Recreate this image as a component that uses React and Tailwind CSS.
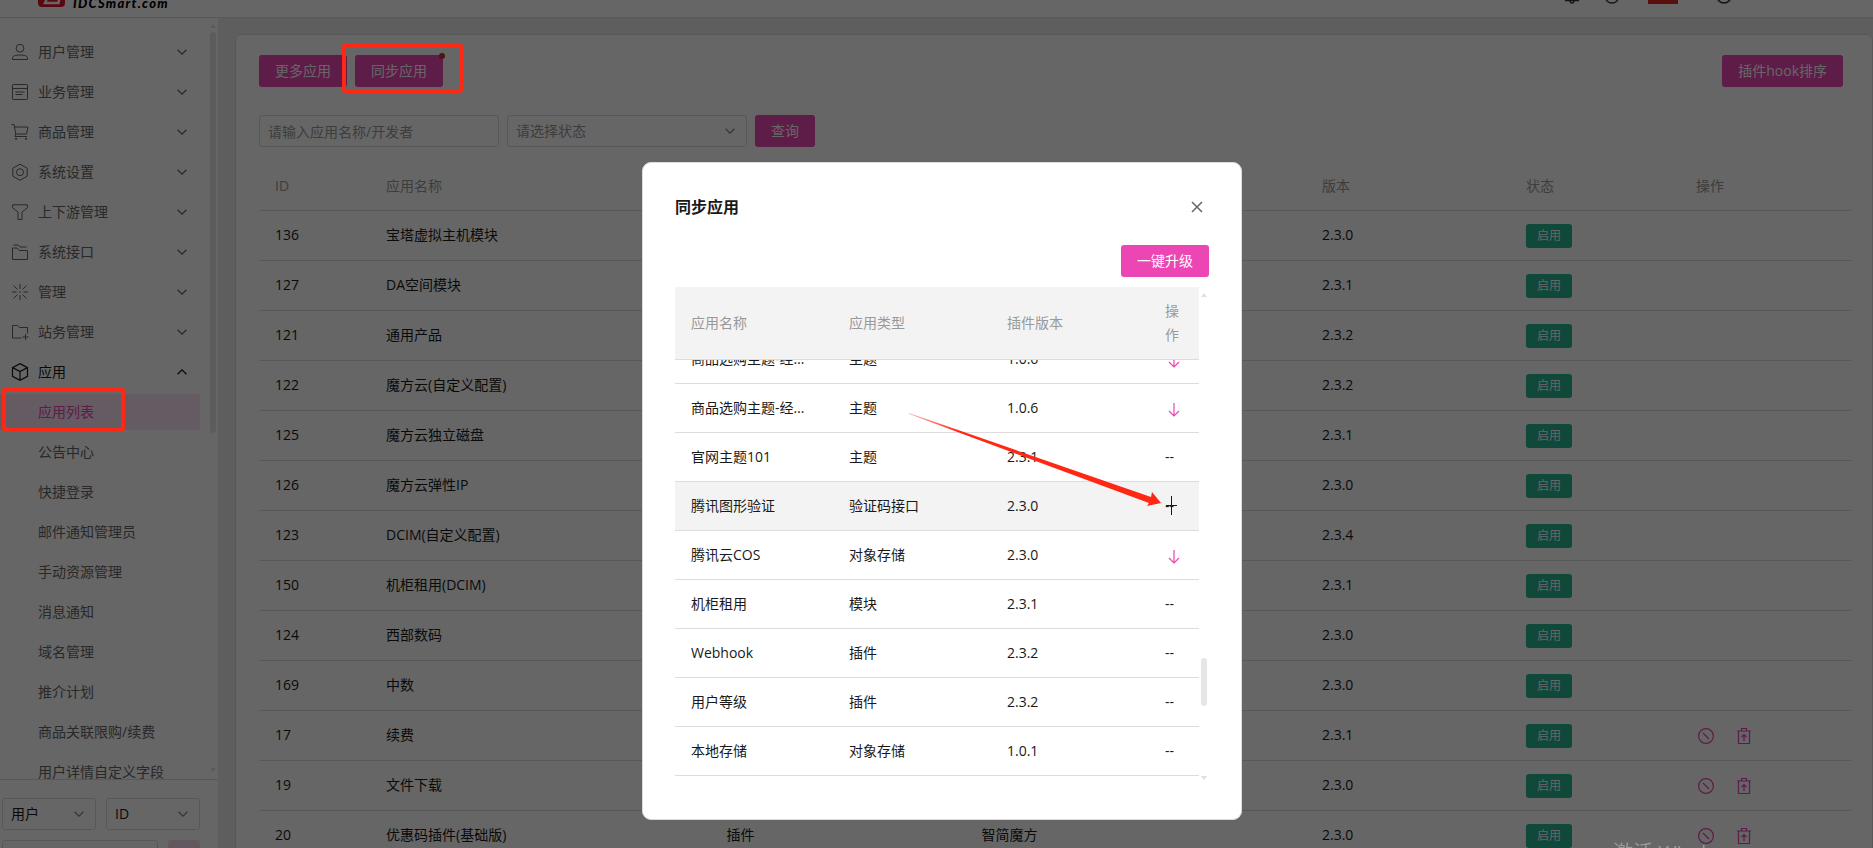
import { useLayoutEffect, useRef } from 'react';

const FONT = "font-['Open_Sans','Noto_Sans_CJK_SC',sans-serif]";

const stroke = { fill: 'none', stroke: 'currentColor', strokeWidth: 1 };

const MENU_ICONS = {
  user: (
    <>
      <circle cx="8" cy="4.2" r="3.9" />
      <path d="M.5 15.500v-1.500c0-2 3-3 7.500-3s7.500 1 7.500 3v1.500z" />
    </>
  ),
  list: (
    <>
      <rect x=".5" y=".5" width="15" height="15" rx=".6" />
      <path d="M.5 4.500h15M3.500 8h9M3.500 10.500h7" />
    </>
  ),
  cart: (
    <>
      <path d="M-.5.500h2.500l1.800 9.500h10.700l1.500-7h-14M3.800 10l-.8 2.500h12" />
      <path d="M3 14.800h2M13 14.800h2" strokeWidth="1.500" />
    </>
  ),
  setting: (
    <>
      <path d="M8 .2l7.200 4v8l-7.200 4-7.200-4v-8z" />
      <circle cx="8" cy="8.200" r="3.500" />
    </>
  ),
  filter: <path d="M.6.800h14.800v3l-5.400 4.200v7.500h-4v-7.500l-5.400-4.200z" />,
  folders: (
    <>
      <path d="M.5 4h4.500l2.500 2.500h8v9h-15z" />
      <path d="M1.500 1h4.500l2 2h6.500" />
    </>
  ),
  burst: (
    <path d="M8 0v5M8 11v5M0 8h4.500M11.500 8h4.500M1.500 1.500l4 4M14.500 1.500l-4 4M1.500 14.500l4-4M14.500 14.500l-4-4M7 8h2" />
  ),
  folderAdd: (
    <>
      <path d="M9.500 14h-9v-12.500h5l2 2h8v6" />
      <path d="M13.500 10v6M10.500 13h6" />
    </>
  ),
  cube: (
    <>
      <path d="M8-.4l7.500 4v8.800l-7.500 4-7.500-4v-8.800z" strokeWidth="1.200" />
      <path d="M.5 3.600l7.500 4 7.500-4M8 7.600v8.800" strokeWidth="1.200" />
    </>
  ),
};

const MENU = [
  ['user', '用户管理'],
  ['list', '业务管理'],
  ['cart', '商品管理'],
  ['setting', '系统设置'],
  ['filter', '上下游管理'],
  ['folders', '系统接口'],
  ['burst', '管理'],
  ['folderAdd', '站务管理'],
];

const SUBMENU = [
  '公告中心', '快捷登录', '邮件通知管理员', '手动资源管理', '消息通知',
  '域名管理', '推介计划', '商品关联限购/续费', '用户详情自定义字段',
];

const APPS = [
  { id: 136, name: '宝塔虚拟主机模块', version: '2.3.0' },
  { id: 127, name: 'DA空间模块', version: '2.3.1' },
  { id: 121, name: '通用产品', version: '2.3.2' },
  { id: 122, name: '魔方云(自定义配置)', version: '2.3.2' },
  { id: 125, name: '魔方云独立磁盘', version: '2.3.1' },
  { id: 126, name: '魔方云弹性IP', version: '2.3.0' },
  { id: 123, name: 'DCIM(自定义配置)', version: '2.3.4' },
  { id: 150, name: '机柜租用(DCIM)', version: '2.3.1' },
  { id: 124, name: '西部数码', version: '2.3.0' },
  { id: 169, name: '中数', version: '2.3.0' },
  { id: 17, name: '续费', version: '2.3.1', ops: true },
  { id: 19, name: '文件下载', version: '2.3.0', ops: true },
  { id: 20, name: '优惠码插件(基础版)', type: '插件', author: '智简魔方', version: '2.3.0', ops: true },
];

const SYNC = [
  { name: '商品选购主题-经典版', type: '主题', version: '1.0.6', upgrade: true },
  { name: '商品选购主题-经典版', type: '主题', version: '1.0.6', upgrade: true },
  { name: '官网主题101', type: '主题', version: '2.3.1' },
  { name: '腾讯图形验证', type: '验证码接口', version: '2.3.0', hover: true },
  { name: '腾讯云COS', type: '对象存储', version: '2.3.0', upgrade: true },
  { name: '机柜租用', type: '模块', version: '2.3.1' },
  { name: 'Webhook', type: '插件', version: '2.3.2' },
  { name: '用户等级', type: '插件', version: '2.3.2' },
  { name: '本地存储', type: '对象存储', version: '1.0.1' },
];

function Chevron({ up, className = '' }) {
  return (
    <svg viewBox="0 0 10 6" className={`h-1.5 w-2.5 shrink-0 ${className}`} fill="none" stroke="currentColor" strokeWidth="1.3">
      <path d={up ? 'M.6 5.300l4.400-4.400 4.400 4.400' : 'M.6.700l4.400 4.400 4.400-4.400'} />
    </svg>
  );
}

function PrimaryButton({ children, className = '' }) {
  return (
    <button type="button" className={`h-8 shrink-0 rounded-[3px] bg-[#eb46b4] px-4 text-sm whitespace-nowrap text-white ${className}`}>
      {children}
    </button>
  );
}

function SelectBox({ label, option, className = '' }) {
  return (
    <div className={`relative flex items-center ${className}`}>
      <select aria-label={label} className="h-8 w-full appearance-none rounded-[3px] border border-[#dcdcdc] bg-white px-2 text-sm text-inherit">
        <option>{option}</option>
      </select>
      <Chevron className="pointer-events-none absolute right-3 text-[#888]" />
    </div>
  );
}

function Header() {
  return (
    <header className="flex h-[18px] shrink-0 items-end justify-between overflow-hidden border-b border-[#dcdcdc] bg-white">
      <div className="flex items-end pl-[38px]">
        <svg viewBox="0 0 27 40" className="mb-[10px] h-10 w-[27px]">
          <rect width="27" height="40" rx="4" fill="#e6142d" />
          <path d="M7 36l2.500-6h12l-1 6z" fill="none" stroke="#fff" strokeWidth="2.500" />
        </svg>
        <span className="mb-[7px] ml-2 font-['Lato',sans-serif] text-[13px] leading-[13px] font-black tracking-widest text-black italic">
          IDCSmart.com
        </span>
      </div>
      <div className="flex items-end pr-[141px] text-[#333]">
        <svg viewBox="0 0 16 16" className="mb-[13px] h-4 w-4" {...stroke} strokeWidth="1.300">
          <path d="M1 12.500h14M6 12.500a2 2.500 0 0 0 4 0M3 12v-6a5 5 0 0 1 10 0v6" />
        </svg>
        <svg viewBox="0 0 16 16" className="mb-[13px] ml-6 h-4 w-4" {...stroke} strokeWidth="1.300">
          <circle cx="8" cy="8" r="7" />
        </svg>
        <span className="mb-[13px] ml-7 h-4 w-[30px] bg-[#e3261f]" />
        <svg viewBox="0 0 16 16" className="mb-[13px] ml-[38px] h-4 w-4" {...stroke} strokeWidth="1.500">
          <circle cx="8" cy="8" r="7" />
        </svg>
      </div>
    </header>
  );
}

function Sidebar() {
  return (
    <aside className="flex w-[218px] shrink-0 flex-col bg-white text-sm text-[#666]">
      <div className="flex min-h-0 flex-1 overflow-hidden">
        <nav className="flex w-[200px] flex-col gap-1 pt-4">
          {MENU.map(([icon, label]) => (
            <a key={label} href="#" className="flex h-9 shrink-0 items-center pr-[13px] pl-3">
              <svg viewBox="0 0 16 16" className="h-4 w-4 overflow-visible" {...stroke}>{MENU_ICONS[icon]}</svg>
              <span className="ml-2.5 flex-1">{label}</span>
              <Chevron />
            </a>
          ))}
          <a href="#" className="flex h-9 shrink-0 items-center pr-[13px] pl-3 text-[#191919]">
            <svg viewBox="0 0 16 16" className="h-4 w-4 overflow-visible" {...stroke}>{MENU_ICONS.cube}</svg>
            <span className="ml-2.5 flex-1">应用</span>
            <Chevron up />
          </a>
          <a href="#" className="flex h-9 shrink-0 items-center rounded-r-[3px] bg-[#fde4f5] pl-[38px] text-[#eb46b4]">应用列表</a>
          {SUBMENU.map((label) => (
            <a key={label} href="#" className="flex h-9 shrink-0 items-center pl-[38px]">{label}</a>
          ))}
        </nav>
        <div className="ml-auto flex w-2 flex-col items-start pt-1.5 text-[#e0e0e0]">
          <svg viewBox="0 0 6 4" className="h-1 w-1.5"><path d="M0 4l3-4 3 4z" fill="currentColor" /></svg>
          <span className="mt-1 h-[401px] w-1.5 rounded-full bg-[#e6e6e6]" />
          <svg viewBox="0 0 6 4" className="mt-auto mb-[7px] h-1 w-1.5"><path d="M0 0l3 4 3-4z" fill="currentColor" /></svg>
        </div>
      </div>
      <div className="h-[69px] shrink-0 overflow-hidden border-t border-[#dcdcdc] pt-[18px] pr-[18px] pl-0.5">
        <div className="flex gap-2.5 text-[#191919]">
          <SelectBox label="搜索范围" option="用户" className="flex-1" />
          <SelectBox label="搜索字段" option="ID" className="flex-1" />
        </div>
        <div className="mt-2.5 flex gap-2.5">
          <input aria-label="关键字" className="h-8 min-w-0 flex-1 rounded-[3px] border border-[#dcdcdc] px-2" />
          <button type="button" aria-label="搜索" className="h-8 w-8 rounded-[3px] bg-[#fbdcf1]" />
        </div>
      </div>
    </aside>
  );
}

function RowActions() {
  return (
    <div className="flex items-center gap-[22px] pl-0.5 text-[#eb46b4]">
      <button type="button" aria-label="禁用">
        <svg viewBox="0 0 16 16" className="block h-4 w-4" {...stroke} strokeWidth="1.200">
          <circle cx="8" cy="8" r="7.400" />
          <path d="M5 5l6 6" />
        </svg>
      </button>
      <button type="button" aria-label="卸载">
        <svg viewBox="0 0 16 16" className="block h-4 w-4" {...stroke} strokeWidth="1.200">
          <path d="M1 3h14M5.500 3v-2.500h5v2.500M2.500 3v12.500h11v-12.500M8 13v-6M5.500 9l2.500-2.500 2.500 2.500" />
        </svg>
      </button>
    </div>
  );
}

function AppTable() {
  return (
    <table className="mt-[15px] w-full table-fixed border-separate border-spacing-0 text-left text-sm text-[#191919]">
      <colgroup>
        <col className="w-[111px]" />
        <col />
        <col className="w-[255px]" />
        <col />
        <col className="w-[204px]" />
        <col className="w-[170px]" />
        <col className="w-[171px]" />
      </colgroup>
      <thead>
        <tr className="h-[49px] text-[#999]">
          {['ID', '应用名称', '', '', '版本', '状态', '操作'].map((label, i) => (
            <th key={i} scope="col" className="border-b border-[#dcdcdc] px-4 font-normal">{label}</th>
          ))}
        </tr>
      </thead>
      <tbody>
        {APPS.map((app) => (
          <tr key={app.id} className="h-[50px]">
            <td className="border-b border-[#dcdcdc] px-4 pb-0.5">{app.id}</td>
            <td className="border-b border-[#dcdcdc] px-4 pb-0.5">{app.name}</td>
            <td className="border-b border-[#dcdcdc] px-4 pb-0.5">{app.type}</td>
            <td className="border-b border-[#dcdcdc] px-4 pb-0.5">{app.author}</td>
            <td className="border-b border-[#dcdcdc] px-4 pb-0.5">{app.version}</td>
            <td className="border-b border-[#dcdcdc] px-4">
              <span className="flex h-6 w-[46px] items-center justify-center rounded-[3px] bg-[#28b491] text-xs text-white">启用</span>
            </td>
            <td className="border-b border-[#dcdcdc] px-4">{app.ops && <RowActions />}</td>
          </tr>
        ))}
      </tbody>
    </table>
  );
}

function MainPanel() {
  return (
    <main className="min-w-0 flex-1 overflow-hidden bg-[#ebebeb] pt-4 pl-[17px]">
      <section className="min-h-full rounded-md border border-[#dcdcdc] bg-white pt-5 pr-[21px] pl-[23px]">
        <div className="flex gap-2 pr-2">
          <PrimaryButton>更多应用</PrimaryButton>
          <div className="relative">
            <PrimaryButton>同步应用</PrimaryButton>
            <span className="absolute -top-0.5 -right-0.5 h-1.5 w-1.5 rounded-full bg-[#c4322c]" />
          </div>
          <PrimaryButton className="ml-auto">插件hook排序</PrimaryButton>
        </div>
        <div className="mt-7 flex gap-2">
          <input
            aria-label="应用名称/开发者"
            placeholder="请输入应用名称/开发者"
            className="h-8 w-60 rounded-[3px] border border-[#dcdcdc] px-2 text-sm placeholder:text-[#999]"
          />
          <SelectBox label="状态" option="请选择状态" className="w-60 text-[#999]" />
          <PrimaryButton>查询</PrimaryButton>
        </div>
        <AppTable />
      </section>
    </main>
  );
}

function SyncDialog() {
  const scroller = useRef(null);
  useLayoutEffect(() => {
    scroller.current.scrollTop = scroller.current.scrollHeight;
  }, []);

  return (
    <div role="dialog" aria-labelledby="sync-title" className="mt-[162px] h-[658px] w-[600px] rounded-[9px] border border-[#dcdcdc] bg-white px-8 pt-8 text-sm text-[#191919]">
      <div className="flex h-6 items-center justify-between pr-1.5">
        <h2 id="sync-title" className="text-base font-bold">同步应用</h2>
        <button type="button" aria-label="关闭">
          <svg viewBox="0 0 12 12" className="block h-3 w-3" fill="none" stroke="#666" strokeWidth="1.500">
            <path d="M1 1l10 10M11 1l-10 10" />
          </svg>
        </button>
      </div>
      <div className="mt-[26px] flex justify-end">
        <PrimaryButton>一键升级</PrimaryButton>
      </div>
      <div className="mt-2.5 flex">
        <div ref={scroller} className="h-[489px] flex-1 overflow-y-auto [scrollbar-width:none]">
          <table className="w-full table-fixed border-separate border-spacing-0 text-left leading-6">
            <colgroup>
              <col />
              <col />
              <col />
              <col className="w-[50px]" />
            </colgroup>
            <thead>
              <tr>
                {['应用名称', '应用类型', '插件版本', '操作'].map((label) => (
                  <th key={label} scope="col" className="sticky top-0 border-b border-[#dcdcdc] bg-[#f3f3f3] px-4 py-3 font-normal text-[#999]">{label}</th>
                ))}
              </tr>
            </thead>
            <tbody>
              {SYNC.map((row, i) => (
                <tr key={i} className={row.hover ? 'bg-[#f3f3f3]' : ''}>
                  <td className="truncate border-b border-[#dcdcdc] px-4 py-3">{row.name}</td>
                  <td className="border-b border-[#dcdcdc] px-4 py-3">{row.type}</td>
                  <td className="border-b border-[#dcdcdc] px-4 py-3">{row.version}</td>
                  <td className="border-b border-[#dcdcdc] py-3 pl-4">
                    {row.upgrade ? (
                      <button type="button" aria-label="升级" className="flex h-6 items-center pt-1 pl-0.5">
                        <svg viewBox="0 0 14 16" className="h-4 w-3.5" fill="none" stroke="#eb46b4" strokeWidth="1.200">
                          <path d="M7 1v13M2 9l5 5 5-5" />
                        </svg>
                      </button>
                    ) : '--'}
                  </td>
                </tr>
              ))}
            </tbody>
          </table>
        </div>
        <div className="flex h-[496px] w-2.5 flex-col items-center pt-1.5 text-[#e0e0e0]">
          <svg viewBox="0 0 6 4" className="h-1 w-1.5"><path d="M0 4l3-4 3 4z" fill="currentColor" /></svg>
          <span className="mt-auto h-12 w-1.5 rounded-full bg-[#e6e6e6]" />
          <svg viewBox="0 0 6 4" className="mt-[70px] mb-[3px] h-1 w-1.5"><path d="M0 0l3 4 3-4z" fill="currentColor" /></svg>
        </div>
      </div>
    </div>
  );
}

function Annotations() {
  return (
    <div className="pointer-events-none fixed inset-0 overflow-hidden">
      <span className="absolute top-[43px] left-[342px] h-[50px] w-[121px] rounded-[4px] border-4 border-[#ff2814]" />
      <span className="absolute top-[387px] left-0.5 h-[45px] w-[123px] rounded-[4px] border-4 border-[#ff2814]" />
      <svg viewBox="0 0 280 110" className="absolute top-[410px] left-[900px] h-[110px] w-[280px]">
        <defs>
          <linearGradient id="fade" x1="0" x2="1">
            <stop offset="0" stopColor="#ff2814" stopOpacity=".3" />
            <stop offset=".2" stopColor="#ff2814" />
          </linearGradient>
        </defs>
        <path d="M9 3L251 87l1-5 9 11-14 3 2-3L9 4z" fill="url(#fade)" />
        <path d="M271.500 86v19M266 95.500h11" stroke="#191919" fill="none" />
      </svg>
      <span className="absolute top-[839px] left-[1613px] text-xl whitespace-nowrap text-[#999]">激活 Windows</span>
    </div>
  );
}

export default function App() {
  return (
    <div className={`flex h-screen flex-col overflow-hidden ${FONT}`}>
      <Header />
      <div className="flex min-h-0 flex-1">
        <Sidebar />
        <MainPanel />
      </div>
      <div className="fixed inset-0 flex items-start justify-center overflow-hidden bg-black/60 pl-[11px]">
        <SyncDialog />
      </div>
      <Annotations />
    </div>
  );
}
